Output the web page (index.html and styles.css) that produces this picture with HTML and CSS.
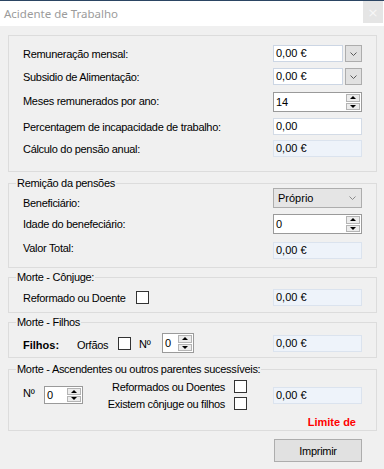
FILE: index.html
```html
<!DOCTYPE html>
<html lang="pt">
<head>
<meta charset="utf-8">
<title>Acidente de Trabalho</title>
<link rel="stylesheet" href="styles.css">
</head>
<body>
<div class="titlebar">
  <span class="title">Acidente de Trabalho</span>
  <span class="close">×</span>
</div>
<div class="content">
  <div class="group g1">
    <div class="row r1">
      <span class="lbl">Remuneração mensal:</span>
      <div class="ddfield"><span class="field">0,00 €</span><span class="ddbtn"><svg class="chev" width="7" height="4" viewBox="0 0 7 4"><polyline points="0.5,0.5 3.5,3.5 6.5,0.5"/></svg></span></div>
    </div>
    <div class="row r2">
      <span class="lbl">Subsidio de Alimentação:</span>
      <div class="ddfield"><span class="field">0,00 €</span><span class="ddbtn"><svg class="chev" width="7" height="4" viewBox="0 0 7 4"><polyline points="0.5,0.5 3.5,3.5 6.5,0.5"/></svg></span></div>
    </div>
    <div class="row r3">
      <span class="lbl">Meses remunerados por ano:</span>
      <div class="spin big"><span class="spintext">14</span><span class="spinbtns"><span class="sb"><span class="up"></span></span><span class="sb"><span class="down"></span></span></span></div>
    </div>
    <div class="row r4">
      <span class="lbl">Percentagem de incapacidade de trabalho:</span>
      <span class="txt">0,00</span>
    </div>
    <div class="row r5">
      <span class="lbl">Cálculo do pensão anual:</span>
      <span class="ro">0,00 €</span>
    </div>
  </div>

  <fieldset class="group g2">
    <legend>Remição da pensões</legend>
    <div class="row ra">
      <span class="lbl low">Beneficiário:</span>
      <div class="combo"><span>Próprio</span><svg class="chev light" width="7" height="4" viewBox="0 0 7 4"><polyline points="0.5,0.5 3.5,3.5 6.5,0.5"/></svg></div>
    </div>
    <div class="row rb">
      <span class="lbl">Idade do benefeciário:</span>
      <div class="spin big"><span class="spintext">0</span><span class="spinbtns"><span class="sb"><span class="up"></span></span><span class="sb"><span class="down"></span></span></span></div>
    </div>
    <div class="row rc">
      <span class="lbl tight">Valor Total:</span>
      <span class="ro">0,00 €</span>
    </div>
  </fieldset>

  <fieldset class="group g3">
    <legend>Morte - Cônjuge:</legend>
    <div class="row">
      <span class="lbl w-ref">Reformado ou Doente</span>
      <span class="chk"></span>
      <span class="ro">0,00 €</span>
    </div>
  </fieldset>

  <fieldset class="group g4">
    <legend>Morte - Filhos</legend>
    <div class="row top">
      <span class="lbl bold w-fil">Filhos:</span>
      <span class="lbl w-orf">Orfãos</span>
      <span class="chk c4"></span>
      <span class="lbl w-no">Nº</span>
      <div class="spin s4"><span class="spintext">0</span><span class="spinbtns"><span class="sb"><span class="up"></span></span><span class="sb"><span class="down"></span></span></span></div>
      <span class="ro r4v">0,00 €</span>
    </div>
  </fieldset>

  <fieldset class="group g5">
    <legend>Morte - Ascendentes ou outros parentes sucessíveis:</legend>
    <div class="row asc">
      <span class="lbl w-no5">Nº</span>
      <div class="spin s5"><span class="spintext">0</span><span class="spinbtns"><span class="sb"><span class="up"></span></span><span class="sb"><span class="down"></span></span></span></div>
      <div class="checks">
        <div class="chkline"><span>Reformados ou Doentes</span><span class="chk"></span></div>
        <div class="chkline"><span>Existem cônjuge ou filhos</span><span class="chk"></span></div>
      </div>
      <span class="ro">0,00 €</span>
    </div>
    <div class="limit">Limite de</div>
  </fieldset>

  <div class="actions">
    <button class="btn" type="button">Imprimir</button>
  </div>
</div>
</body>
</html>
```

FILE: styles.css
```css
* { box-sizing: border-box; }
html, body { margin: 0; padding: 0; }
body {
  width: 384px;
  height: 469px;
  overflow: hidden;
  background: #f0f0f0;
  font-family: "Liberation Sans", Arial, sans-serif;
  font-size: 11px;
  letter-spacing: -0.3px;
  color: #000;
}

.titlebar {
  height: 26px;
  background: #fff;
  border-top: 1px solid #2b4563;
  display: flex;
  justify-content: space-between;
  align-items: flex-start;
}
.title {
  font-family: "Noto Sans", "Open Sans", sans-serif;
  font-size: 11.5px;
  letter-spacing: 0;
  line-height: 16px;
  color: #9b9b9b;
  padding: 5px 0 0 4px;
}
.close {
  width: 20px;
  height: 22px;
  margin-right: 1px;
  background: #e5e5e5;
  color: #f7f7f7;
  font-family: "DejaVu Sans", sans-serif;
  font-size: 13px;
  letter-spacing: 0;
  display: flex;
  align-items: center;
  justify-content: center;
}

.content { padding: 9px 7px 0 8px; }

.group {
  border: 1px solid #dcdcdc;
  margin: 0;
  padding: 0 14px;
  min-width: 0;
}
legend {
  line-height: 10px;
  padding: 0 1px;
  margin-left: -7px;
  font-size: 11px;
}

.row { display: flex; align-items: center; }
.row.top { align-items: flex-start; }
.lbl { line-height: 14px; white-space: nowrap; }
.bold { font-weight: bold; letter-spacing: 0; }

/* group 1 */
.g1 { padding-top: 9px; padding-bottom: 14px; }
.g1 .row { justify-content: space-between; }
.r1, .r2, .r4, .r5 { height: 17px; }
.r2 { margin-top: 6px; }
.r3 { height: 20px; margin-top: 7px; }
.r3 .lbl { margin-top: -3px; }
.r4 { margin-top: 6px; }
.r5 { margin-top: 5px; }

/* group 2 */
.g2 { margin-top: 6px; padding-top: 0; padding-bottom: 8px; }
.g2 .row { justify-content: space-between; }
.ra { align-items: flex-start; }
.ra .lbl { margin-top: 8px; }
.rb { margin-top: 4px; }
.rc { margin-top: 8px; align-items: flex-start; }
.lbl.tight { line-height: 12px; }

/* group 3 */
.g3 { margin-top: 4px; padding-top: 7px; padding-bottom: 6px; }
.g3 .row { height: 17px; }
.w-ref { width: 113px; }
.g3 .ro { margin-left: auto; }

/* group 4 */
.g4 { margin-top: 4px; padding-top: 6px; padding-bottom: 4px; }
.g4 .lbl { margin-top: 5px; }
.w-fil { width: 54px; }
.w-orf { width: 41px; }
.c4 { margin-top: 4px; margin-right: 8px; }
.g4 .lbl.w-no { width: 23px; margin-top: 4px; }
.r4v { margin-left: auto; margin-top: 2px; }

/* group 5 */
.g5 { margin-top: 6px; padding-top: 4px; padding-bottom: 1px; }
.asc { height: 34px; }
.w-no5 { width: 21px; margin-top: -4px; }
.checks { width: 164px; display: flex; flex-direction: column; }
.chkline {
  height: 17px;
  display: flex;
  align-items: center;
  justify-content: flex-end;
  white-space: nowrap;
}
.chkline .chk { margin-left: 9px; }
.asc .ro { margin-left: auto; }
.limit {
  margin-top: 3px;
  line-height: 14px;
  text-align: right;
  padding-right: 6px;
  color: #f00;
  font-weight: bold;
  letter-spacing: 0;
}

/* controls */
.ddfield { width: 89px; height: 17px; display: flex; letter-spacing: 0; }
.field {
  width: 70px;
  height: 17px;
  background: #fff;
  border: 1px solid #ccd6e4;
  padding-left: 2px;
  line-height: 15px;
}
.ddbtn {
  width: 17px;
  height: 17px;
  margin-left: 2px;
  background: #e1e1e1;
  border: 1px solid #adadad;
  display: flex;
  align-items: center;
  justify-content: center;
}
.chev { display: block; fill: none; stroke: #5a5a5a; stroke-width: 1; }
.chev.light { stroke: #8a8a8a; }

.txt, .ro {
  width: 89px;
  height: 17px;
  padding-left: 2px;
  line-height: 15px;
  flex: none;
  letter-spacing: 0;
}
.txt { background: #fff; border: 1px solid #d3dbe6; }
.ro { background: #eef3fa; border: 1px solid #dbe3ee; }

.combo {
  width: 89px;
  height: 20px;
  background: #e5e5e5;
  border: 1px solid #adadad;
  display: flex;
  align-items: center;
  justify-content: space-between;
  padding: 0 5px 0 4px;
  letter-spacing: 0;
}

.spin {
  display: flex;
  background: #fff;
  border: 1px solid #9a9a9a;
  flex: none;
  letter-spacing: 0;
}
.spin.big { width: 89px; height: 20px; }
.s4 { width: 32px; height: 20px; }
.s5 { width: 39px; height: 18px; }
.spintext { flex: 1; padding-left: 2px; line-height: 18px; }
.s5 .spintext { line-height: 16px; }
.spinbtns {
  width: 15px;
  display: flex;
  flex-direction: column;
  padding: 1px 1px 1px 0;
  gap: 1px;
}
.sb {
  flex: 1;
  background: #ececec;
  border: 1px solid #b4b4b4;
  display: flex;
  align-items: center;
  justify-content: center;
}
.up {
  width: 0; height: 0;
  border-left: 3px solid transparent;
  border-right: 3px solid transparent;
  border-bottom: 3px solid #000;
}
.down {
  width: 0; height: 0;
  border-left: 3px solid transparent;
  border-right: 3px solid transparent;
  border-top: 3px solid #000;
}

.chk {
  width: 13px;
  height: 13px;
  background: #fff;
  border: 1px solid #333;
  flex: none;
}

.actions {
  display: flex;
  justify-content: flex-end;
  padding: 8px 15px 0 0;
}
.btn {
  width: 88px;
  height: 23px;
  margin: 0;
  background: #e1e1e1;
  border: 1px solid #adadad;
  font-family: "Liberation Sans", Arial, sans-serif;
  font-size: 11px;
  letter-spacing: -0.3px;
  color: #000;
  padding: 0;
}
```
